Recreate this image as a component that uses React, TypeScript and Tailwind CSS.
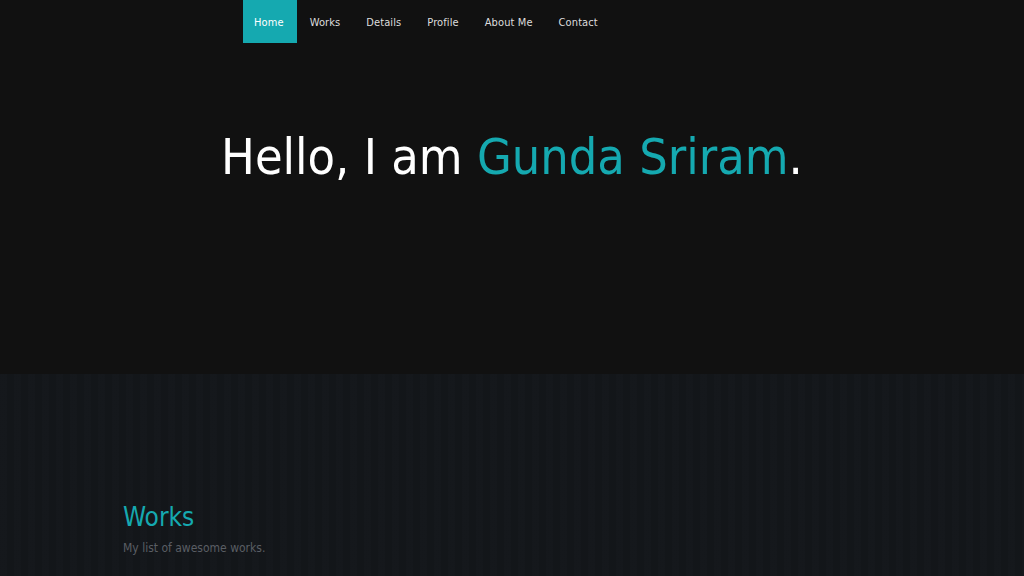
import React from "react";

const navItems = ["Home", "Works", "Details", "Profile", "About Me", "Contact"];

export default function App() {
  return (
    <div className="w-full min-h-screen bg-[#111111] font-['DejaVu_Sans_Condensed','DejaVu_Sans',sans-serif]">
      <section className="h-[374px] bg-[#111111] flex flex-col">
        <nav className="flex pl-[243px] h-[43px]">
          {navItems.map((item, i) => (
            <a
              key={item}
              className={
                "h-[43px] flex items-center pt-[3px] text-[11px] tracking-[0.1px] " +
                (i === 0 ? "bg-[#15a9b0] text-white pl-[11px] pr-[13px]" : "text-[#dddddd] px-[13px]")
              }
            >
              {item}
            </a>
          ))}
        </nav>
        <h1 className="mt-[84px] text-center text-[50px] leading-[60px] text-white">
          Hello, I am <span className="text-[#15a9b0]">Gunda Sriram</span>.
        </h1>
      </section>
      <section className="h-[202px] bg-[#13161a] bg-[repeating-linear-gradient(90deg,rgba(255,255,255,0.008)_0px,rgba(255,255,255,0.008)_7px,rgba(0,0,0,0.02)_7px,rgba(0,0,0,0.02)_14px)] pl-[123px] pt-[126px]">
        <h2 className="text-[26px] leading-[34px] text-[#15a9b0]">Works</h2>
        <p className="mt-[5px] text-[12px] leading-[18px] text-[#5a5e64]">My list of awesome works.</p>
      </section>
    </div>
  );
}
